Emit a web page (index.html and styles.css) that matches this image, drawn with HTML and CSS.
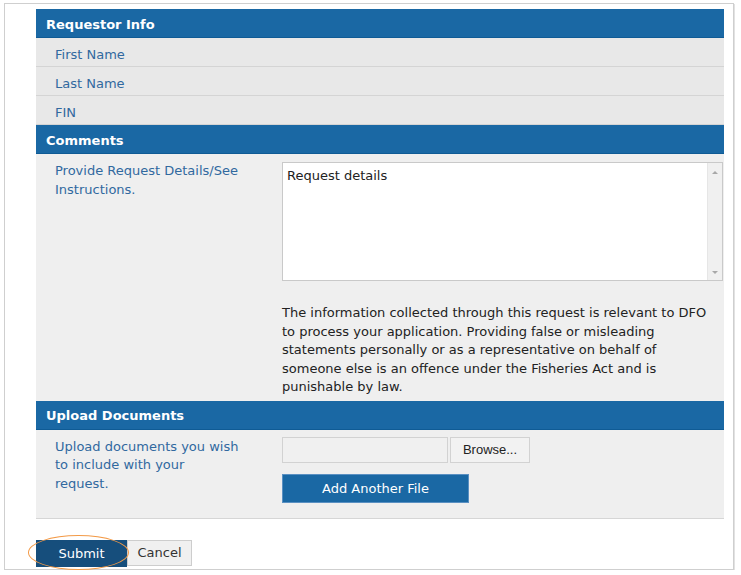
FILE: index.html
```html
<!DOCTYPE html>
<html lang="en">
<head>
    <meta charset="UTF-8">
    <meta name="viewport" content="width=device-width, initial-scale=1.0">
    <title>Request Form</title>
    <link rel="stylesheet" href="styles.css">
</head>
<body>
    <div class="frame">
        <div class="panel">
            <div class="section-head">Requestor Info</div>
            <div class="info-row">First Name</div>
            <div class="info-row">Last Name</div>
            <div class="info-row">FIN</div>

            <div class="section-head">Comments</div>
            <div class="section-body comments">
                <label class="field-label" for="details">Provide Request Details/See Instructions.</label>
                <div class="field-input">
                    <div class="textbox">
                        <textarea id="details" name="details">Request details</textarea>
                        <div class="scrollbar">
                            <span class="arrow up"></span>
                            <span class="arrow down"></span>
                        </div>
                    </div>
                    <p class="notice">The information collected through this request is relevant to DFO to process your application. Providing false or misleading statements personally or as a representative on behalf of someone else is an offence under the Fisheries Act and is punishable by law.</p>
                </div>
            </div>

            <div class="section-head">Upload Documents</div>
            <div class="section-body upload">
                <div class="field-label">Upload documents you wish to include with your request.</div>
                <div class="field-input">
                    <div class="file-row">
                        <span class="file-name"></span>
                        <button type="button" class="browse-button">Browse...</button>
                    </div>
                    <button type="button" class="add-button">Add Another File</button>
                </div>
            </div>
        </div>

        <div class="actions">
            <span class="highlight">
                <button type="button" class="submit-button">Submit</button>
            </span>
            <button type="button" class="cancel-button">Cancel</button>
        </div>
    </div>
</body>
</html>
```

FILE: styles.css
```css
/* Page */
body {
    margin: 0;
    background-color: #fff;
    font-family: 'DejaVu Sans', Verdana, sans-serif;
    font-size: 13px;
    color: #222;
}
.frame {
    box-sizing: border-box;
    width: 730px;
    height: 567px;
    margin: 3px 0 0 4px;
    padding: 5px 0 0 31px;
    border: 1px solid #cfcfcf;
    box-shadow: 1px 1px 0 #e2e2e2;
}
.panel {
    width: 688px;
}

/* Section headers */
.section-head {
    box-sizing: border-box;
    height: 29px;
    padding: 2px 0 0 10px;
    background-color: #1a68a4;
    border-bottom: 1px solid #0f5b95;
    color: #fff;
    font-weight: bold;
    display: flex;
    align-items: center;
}

/* Requestor rows */
.info-row {
    box-sizing: border-box;
    height: 29px;
    padding: 5px 0 0 19px;
    background-color: #e8e8e8;
    border-bottom: 1px solid #d4d4d4;
    color: #31699f;
    display: flex;
    align-items: center;
}

/* Section bodies */
.section-body {
    display: flex;
    background-color: #efefef;
}
.comments {
    padding: 8px 0 4px 0;
}
.upload {
    padding: 7px 0 15px 0;
    border-bottom: 1px solid #d6d6d6;
}
.field-label {
    width: 185px;
    padding: 0 42px 0 19px;
    line-height: 18.5px;
    color: #31699f;
}
.upload .field-label {
    padding-top: 1px;
}
.field-input {
    flex: 1;
    padding-right: 1px;
}

/* Text area with classic scrollbar */
.textbox {
    display: flex;
    height: 119px;
    box-sizing: border-box;
    border: 1px solid #c9c9c9;
    background-color: #fff;
}
.textbox textarea {
    flex: 1;
    margin: 0;
    border: none;
    padding: 4px 4px;
    resize: none;
    overflow: hidden;
    font-family: 'DejaVu Sans', Verdana, sans-serif;
    font-size: 13px;
    line-height: 18px;
    color: #222;
    outline: none;
}
.scrollbar {
    width: 14px;
    background-color: #f0f0f0;
    border-left: 1px solid #e6e6e6;
    display: flex;
    flex-direction: column;
    justify-content: space-between;
    align-items: center;
    padding: 8px 0 6px 0;
}
.arrow {
    width: 0;
    height: 0;
    border-left: 3px solid transparent;
    border-right: 3px solid transparent;
}
.arrow.up {
    border-bottom: 3px solid #a8a8a8;
}
.arrow.down {
    border-top: 3px solid #a8a8a8;
}
.notice {
    width: 436px;
    margin: 23px 0 0 0;
    line-height: 18.5px;
    color: #222;
}

/* Upload controls */
.file-row {
    display: flex;
    gap: 2px;
}
.file-name {
    box-sizing: border-box;
    width: 166px;
    height: 26px;
    border: 1px solid #d2d2d2;
    background-color: #f0f0f0;
}
.browse-button {
    box-sizing: border-box;
    width: 80px;
    height: 26px;
    border: 1px solid #d2d2d2;
    background-color: #f2f2f2;
    font-family: 'Liberation Sans', Arial, sans-serif;
    font-size: 13px;
    color: #222;
    padding: 0;
}
.add-button {
    box-sizing: border-box;
    display: block;
    width: 187px;
    height: 29px;
    margin-top: 11px;
    border: 1px solid #5a90c2;
    background-color: #1a68a4;
    color: #fff;
    font-family: 'DejaVu Sans', Verdana, sans-serif;
    font-size: 13px;
    padding: 0;
}

/* Form actions */
.actions {
    display: flex;
    align-items: flex-start;
    margin-top: 21px;
}
.highlight {
    position: relative;
    display: inline-flex;
}
.highlight::after {
    content: '';
    position: absolute;
    left: -8px;
    top: -5px;
    width: 99px;
    height: 33px;
    border: 1.5px solid #f39a47;
    border-radius: 50%;
    pointer-events: none;
}
.submit-button {
    box-sizing: border-box;
    width: 91px;
    height: 27px;
    border: none;
    background-color: #164e7c;
    color: #fff;
    font-family: 'DejaVu Sans', Verdana, sans-serif;
    font-size: 13px;
    padding: 0;
}
.cancel-button {
    box-sizing: border-box;
    width: 65px;
    height: 26px;
    border: 1px solid #cdcdcd;
    background-color: #f0f0f0;
    color: #333;
    font-family: 'DejaVu Sans', Verdana, sans-serif;
    font-size: 13px;
    padding: 0;
}
```
